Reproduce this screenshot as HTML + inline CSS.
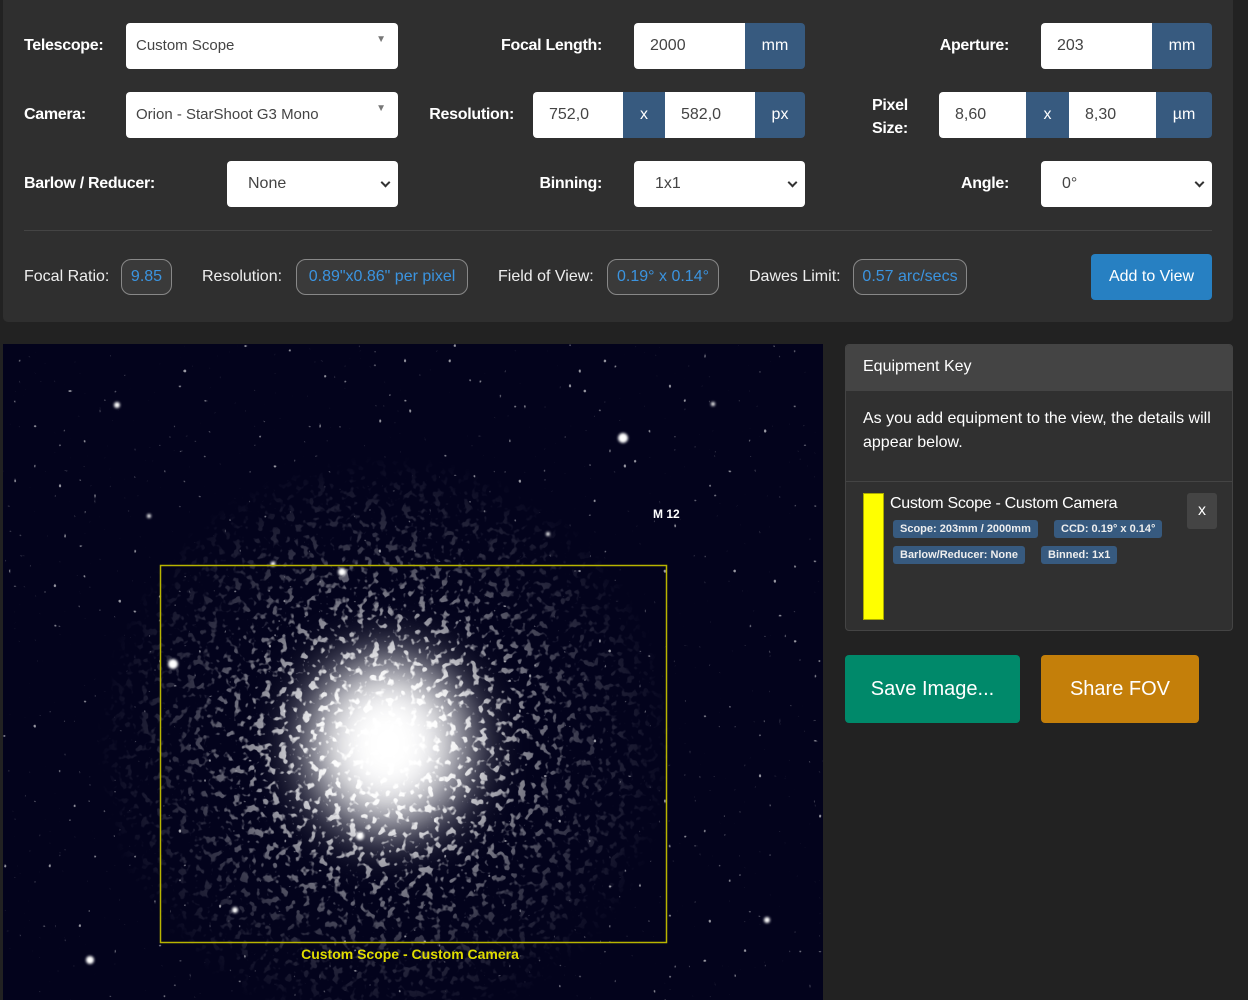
<!DOCTYPE html>
<html><head><meta charset="utf-8"><style>
*{box-sizing:border-box;margin:0;padding:0}
body{width:1248px;height:1000px;background:#222;font-family:"Liberation Sans",sans-serif;color:#fff;position:relative;overflow:hidden}
.a{position:absolute}
.top{left:3px;top:0;width:1230px;height:322px;background:#2f2f2f;border-radius:0 0 5px 5px}
.lbl{font-weight:bold;font-size:16px;letter-spacing:-0.3px}
.r{text-align:right}
.box{background:#fff;border-radius:4px;color:#444;font-size:16px;line-height:46px;height:46px}
.ad{background:#375a7f;color:#fff;font-size:16px;text-align:center;line-height:46px;height:46px}
.car{position:absolute;right:12px;top:-6px;color:#777;font-size:10px}
.chev{position:absolute;right:9px;top:18px;width:7px;height:7px;border-right:2px solid #333;border-bottom:2px solid #333;transform:rotate(45deg)}
.bl{font-size:16px;color:#eee}
.bd{height:36px;top:259px;border:1px solid #888;border-radius:10px;background:#3a3a3a;color:#3b94e0;font-size:16px;line-height:34px;text-align:center}
.tag{background:#375a7f;border-radius:3px;font-size:11px;font-weight:bold;color:#eee;height:18px;line-height:18px;padding:0 7px}
</style></head><body>
<div class="a top"></div>
<div class="a lbl" style="left:24px;top:37px">Telescope:</div>
<div class="a box" style="left:126px;top:23px;width:272px;padding-left:10px;font-size:15px">Custom Scope<span class="car">▼</span></div>
<div class="a lbl r" style="left:440px;top:37px;width:162px">Focal Length:</div>
<div class="a box" style="left:634px;top:23px;width:120px;padding-left:16px;border-radius:4px 0 0 4px">2000</div>
<div class="a ad" style="left:745px;top:23px;width:60px;border-radius:0 4px 4px 0">mm</div>
<div class="a lbl r" style="left:850px;top:37px;width:159px">Aperture:</div>
<div class="a box" style="left:1041px;top:23px;width:120px;padding-left:16px;border-radius:4px 0 0 4px">203</div>
<div class="a ad" style="left:1152px;top:23px;width:60px;border-radius:0 4px 4px 0">mm</div>
<div class="a lbl" style="left:24px;top:106px">Camera:</div>
<div class="a box" style="left:126px;top:92px;width:272px;padding-left:10px;font-size:15px">Orion - StarShoot G3 Mono<span class="car">▼</span></div>
<div class="a lbl r" style="left:400px;top:106px;width:114px">Resolution:</div>
<div class="a box" style="left:533px;top:92px;width:95px;padding-left:16px;border-radius:4px 0 0 4px">752,0</div>
<div class="a ad" style="left:623px;top:92px;width:42px">x</div>
<div class="a box" style="left:665px;top:92px;width:92px;padding-left:16px;border-radius:0">582,0</div>
<div class="a ad" style="left:755px;top:92px;width:50px;border-radius:0 4px 4px 0">px</div>
<div class="a lbl" style="left:872px;top:94px;line-height:23px">Pixel<br>Size:</div>
<div class="a box" style="left:939px;top:92px;width:92px;padding-left:16px;border-radius:4px 0 0 4px">8,60</div>
<div class="a ad" style="left:1026px;top:92px;width:43px">x</div>
<div class="a box" style="left:1069px;top:92px;width:90px;padding-left:16px;border-radius:0">8,30</div>
<div class="a ad" style="left:1156px;top:92px;width:56px;border-radius:0 4px 4px 0">µm</div>
<div class="a lbl" style="left:24px;top:175px">Barlow / Reducer:</div>
<div class="a box" style="left:227px;top:161px;width:171px;padding-left:21px">None<span class="chev"></span></div>
<div class="a lbl r" style="left:450px;top:175px;width:152px">Binning:</div>
<div class="a box" style="left:634px;top:161px;width:171px;padding-left:21px">1x1<span class="chev"></span></div>
<div class="a lbl r" style="left:850px;top:175px;width:159px">Angle:</div>
<div class="a box" style="left:1041px;top:161px;width:171px;padding-left:21px">0°<span class="chev"></span></div>
<div class="a" style="left:24px;top:230px;width:1188px;height:1px;background:#444"></div>
<div class="a bl" style="left:24px;top:268px">Focal Ratio:</div>
<div class="a bd" style="left:121px;width:51px">9.85</div>
<div class="a bl" style="left:202px;top:268px">Resolution:</div>
<div class="a bd" style="left:296px;width:172px">0.89"x0.86" per pixel</div>
<div class="a bl" style="left:498px;top:268px">Field of View:</div>
<div class="a bd" style="left:607px;width:112px">0.19° x 0.14°</div>
<div class="a bl" style="left:749px;top:268px">Dawes Limit:</div>
<div class="a bd" style="left:853px;width:114px">0.57 arc/secs</div>
<div class="a" style="left:1091px;top:254px;width:121px;height:46px;background:#2780c2;border-radius:4px;font-size:16px;line-height:46px;text-align:center">Add to View</div>
<svg class="a" style="left:3px;top:344px" width="820" height="656" viewBox="0 0 820 656">
<defs>
<radialGradient id="cg" cx="382" cy="400" r="290" gradientUnits="userSpaceOnUse">
<stop offset="0" stop-color="#fff" stop-opacity="1"/>
<stop offset="0.2" stop-color="#fff" stop-opacity="0.95"/>
<stop offset="0.42" stop-color="#fff" stop-opacity="0.6"/>
<stop offset="0.68" stop-color="#fff" stop-opacity="0.2"/>
<stop offset="1" stop-color="#fff" stop-opacity="0"/>
</radialGradient>
<filter id="n" x="0" y="0" width="100%" height="100%">
<feTurbulence type="fractalNoise" baseFrequency="0.13" numOctaves="2" seed="4"/>
<feColorMatrix type="matrix" values="0 0 0 0 1 0 0 0 0 1 0 0 0 0 1 8 0 0 0 -4.4"/>
</filter>
<mask id="m"><rect width="820" height="656" fill="url(#cg)"/></mask>
<filter id="n2" x="0" y="0" width="100%" height="100%">
<feTurbulence type="fractalNoise" baseFrequency="0.2" numOctaves="1" seed="9"/>
<feColorMatrix type="matrix" values="0 0 0 0 1 0 0 0 0 1 0 0 0 0 1 16 0 0 0 -11.8"/>
</filter>
<filter id="b" x="-50%" y="-50%" width="200%" height="200%"><feGaussianBlur stdDeviation="26"/></filter>
<filter id="s" x="-100%" y="-100%" width="300%" height="300%"><feGaussianBlur stdDeviation="1.2"/></filter>
</defs>
<rect width="820" height="656" fill="#03031c"/>
<rect width="820" height="656" filter="url(#n2)" opacity="0.6"/>
<rect width="820" height="656" filter="url(#n)" mask="url(#m)"/>
<ellipse cx="385" cy="400" rx="80" ry="85" fill="#fff" filter="url(#b)"/>
<g fill="#fff" filter="url(#s)">
<circle cx="114" cy="61" r="3"/><circle cx="620" cy="94" r="5"/><circle cx="339" cy="228" r="4"/>
<circle cx="170" cy="320" r="5"/><circle cx="87" cy="656" r="4" transform="translate(0,-40)"/>
<circle cx="764" cy="576" r="3"/><circle cx="232" cy="566" r="3"/>
<circle cx="270" cy="220" r="2.5"/><circle cx="357" cy="492" r="4"/><circle cx="146" cy="172" r="2"/>
<circle cx="710" cy="60" r="2"/><circle cx="545" cy="190" r="2"/>
</g>
<text x="650" y="174" fill="#fff" font-size="12" font-weight="bold" font-family="Liberation Sans">M 12</text>
<rect x="157.5" y="221.5" width="506" height="377" fill="none" stroke="#b8b400" stroke-width="1.5"/>
<text x="407" y="615" fill="#e0dc00" font-size="14" font-weight="bold" text-anchor="middle" font-family="Liberation Sans">Custom Scope - Custom Camera</text>
</svg>
<div class="a" style="left:845px;top:344px;width:388px;height:287px;background:#303030;border:1px solid #444;border-radius:4px;overflow:hidden">
<div style="height:46px;background:#444;padding:13px 17px;font-size:16px">Equipment Key</div>
<div style="padding:16px 17px;font-size:16px;line-height:24px;height:91px;border-bottom:1px solid #444">As you add equipment to the view, the details will appear below.</div>
</div>
<div class="a" style="left:863px;top:493px;width:21px;height:127px;background:#ff0;border:1px solid #aa0"></div>
<div class="a" style="left:890px;top:495px;font-size:16px;letter-spacing:-0.3px">Custom Scope - Custom Camera</div>
<div class="a tag" style="left:893px;top:520px">Scope: 203mm / 2000mm</div>
<div class="a tag" style="left:1054px;top:520px">CCD: 0.19° x 0.14°</div>
<div class="a tag" style="left:893px;top:546px">Barlow/Reducer: None</div>
<div class="a tag" style="left:1041px;top:546px">Binned: 1x1</div>
<div class="a" style="left:1187px;top:493px;width:30px;height:36px;background:#444;border-radius:3px;text-align:center;line-height:36px;font-size:16px">x</div>
<div class="a" style="left:845px;top:655px;width:175px;height:68px;background:#00896a;border-radius:4px;font-size:20px;text-align:center;line-height:68px">Save Image...</div>
<div class="a" style="left:1041px;top:655px;width:158px;height:68px;background:#c47f0a;border-radius:4px;font-size:20px;text-align:center;line-height:68px">Share FOV</div>
</body></html>
